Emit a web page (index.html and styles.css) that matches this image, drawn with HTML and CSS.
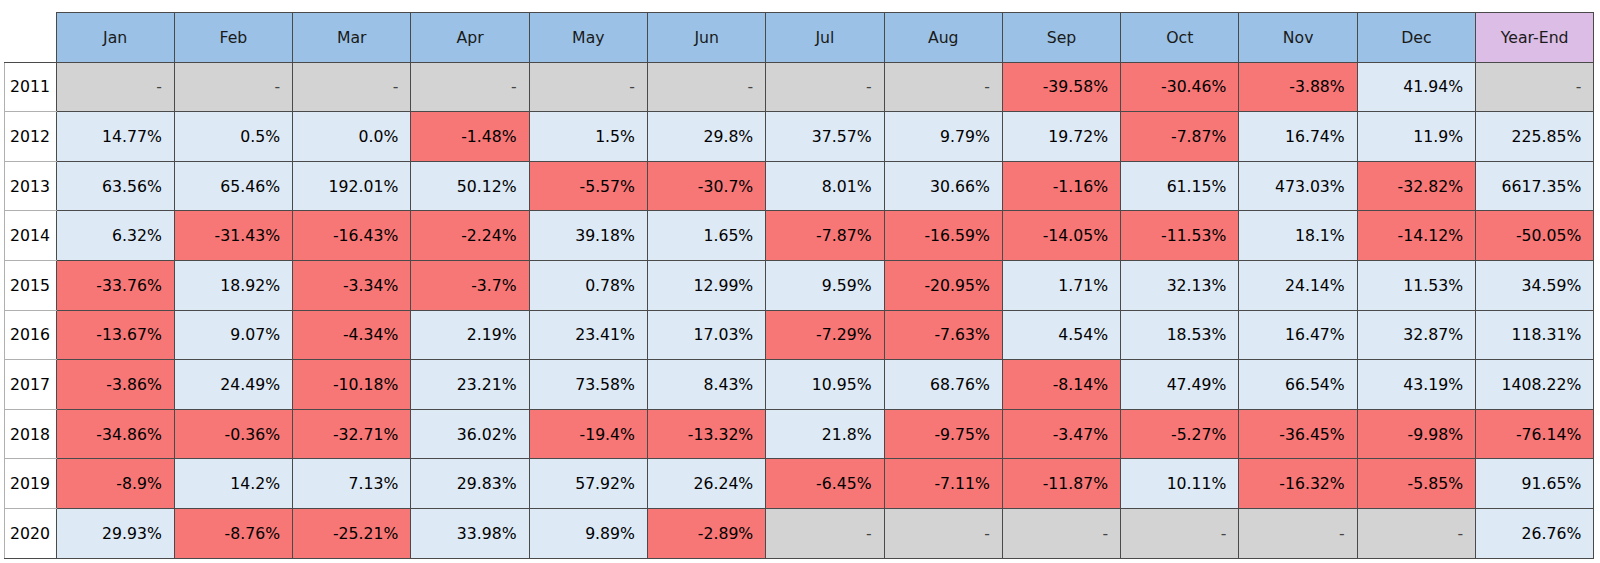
FILE: index.html
```html
<!DOCTYPE html>
<html>
<head>
<meta charset="utf-8">
<link rel="stylesheet" href="styles.css">
</head>
<body>
<table class="returns">
<thead>
<tr><th class="corner"></th><th>Jan</th><th>Feb</th><th>Mar</th><th>Apr</th><th>May</th><th>Jun</th><th>Jul</th><th>Aug</th><th>Sep</th><th>Oct</th><th>Nov</th><th>Dec</th><th class="ye">Year-End</th></tr>
</thead>
<tbody>
<tr><th class="yr">2011</th><td class="n">-</td><td class="n">-</td><td class="n">-</td><td class="n">-</td><td class="n">-</td><td class="n">-</td><td class="n">-</td><td class="n">-</td><td class="r">-39.58%</td><td class="r">-30.46%</td><td class="r">-3.88%</td><td class="p">41.94%</td><td class="n">-</td></tr>
<tr><th class="yr">2012</th><td class="p">14.77%</td><td class="p">0.5%</td><td class="p">0.0%</td><td class="r">-1.48%</td><td class="p">1.5%</td><td class="p">29.8%</td><td class="p">37.57%</td><td class="p">9.79%</td><td class="p">19.72%</td><td class="r">-7.87%</td><td class="p">16.74%</td><td class="p">11.9%</td><td class="p">225.85%</td></tr>
<tr><th class="yr">2013</th><td class="p">63.56%</td><td class="p">65.46%</td><td class="p">192.01%</td><td class="p">50.12%</td><td class="r">-5.57%</td><td class="r">-30.7%</td><td class="p">8.01%</td><td class="p">30.66%</td><td class="r">-1.16%</td><td class="p">61.15%</td><td class="p">473.03%</td><td class="r">-32.82%</td><td class="p">6617.35%</td></tr>
<tr><th class="yr">2014</th><td class="p">6.32%</td><td class="r">-31.43%</td><td class="r">-16.43%</td><td class="r">-2.24%</td><td class="p">39.18%</td><td class="p">1.65%</td><td class="r">-7.87%</td><td class="r">-16.59%</td><td class="r">-14.05%</td><td class="r">-11.53%</td><td class="p">18.1%</td><td class="r">-14.12%</td><td class="r">-50.05%</td></tr>
<tr><th class="yr">2015</th><td class="r">-33.76%</td><td class="p">18.92%</td><td class="r">-3.34%</td><td class="r">-3.7%</td><td class="p">0.78%</td><td class="p">12.99%</td><td class="p">9.59%</td><td class="r">-20.95%</td><td class="p">1.71%</td><td class="p">32.13%</td><td class="p">24.14%</td><td class="p">11.53%</td><td class="p">34.59%</td></tr>
<tr><th class="yr">2016</th><td class="r">-13.67%</td><td class="p">9.07%</td><td class="r">-4.34%</td><td class="p">2.19%</td><td class="p">23.41%</td><td class="p">17.03%</td><td class="r">-7.29%</td><td class="r">-7.63%</td><td class="p">4.54%</td><td class="p">18.53%</td><td class="p">16.47%</td><td class="p">32.87%</td><td class="p">118.31%</td></tr>
<tr><th class="yr">2017</th><td class="r">-3.86%</td><td class="p">24.49%</td><td class="r">-10.18%</td><td class="p">23.21%</td><td class="p">73.58%</td><td class="p">8.43%</td><td class="p">10.95%</td><td class="p">68.76%</td><td class="r">-8.14%</td><td class="p">47.49%</td><td class="p">66.54%</td><td class="p">43.19%</td><td class="p">1408.22%</td></tr>
<tr><th class="yr">2018</th><td class="r">-34.86%</td><td class="r">-0.36%</td><td class="r">-32.71%</td><td class="p">36.02%</td><td class="r">-19.4%</td><td class="r">-13.32%</td><td class="p">21.8%</td><td class="r">-9.75%</td><td class="r">-3.47%</td><td class="r">-5.27%</td><td class="r">-36.45%</td><td class="r">-9.98%</td><td class="r">-76.14%</td></tr>
<tr><th class="yr">2019</th><td class="r">-8.9%</td><td class="p">14.2%</td><td class="p">7.13%</td><td class="p">29.83%</td><td class="p">57.92%</td><td class="p">26.24%</td><td class="r">-6.45%</td><td class="r">-7.11%</td><td class="r">-11.87%</td><td class="p">10.11%</td><td class="r">-16.32%</td><td class="r">-5.85%</td><td class="p">91.65%</td></tr>
<tr><th class="yr">2020</th><td class="p">29.93%</td><td class="r">-8.76%</td><td class="r">-25.21%</td><td class="p">33.98%</td><td class="p">9.89%</td><td class="r">-2.89%</td><td class="n">-</td><td class="n">-</td><td class="n">-</td><td class="n">-</td><td class="n">-</td><td class="n">-</td><td class="p">26.76%</td></tr>
</tbody>
</table>
</body>
</html>
```
FILE: styles.css
```css
html, body {
  margin: 0;
  padding: 0;
  background: #ffffff;
}

.returns {
  margin: 12px 0 0 4px;
  border-collapse: collapse;
  table-layout: fixed;
  font-family: "DejaVu Sans", sans-serif;
  font-size: 15.7px;
  color: #000;
}

.returns th,
.returns td {
  box-sizing: border-box;
  height: 49.6px;
  padding: 0;
  border: 1px solid #4a4a4a;
  font-weight: normal;
  white-space: nowrap;
}

.returns thead th {
  width: 118.3px;
  background: #9bc2e6;
  text-align: center;
  color: #1a1a1a;
}

.returns thead th.corner {
  width: 51.5px;
  background: transparent;
  border-top: none;
  border-left: none;
}

.returns thead th.ye {
  background: #dbbde5;
}

.returns th.yr {
  background: #ffffff;
  text-align: left;
  padding-left: 5px;
  border-color: #b0b0b0;
  border-right-color: #4a4a4a;
}

.returns tbody tr:last-child th.yr {
  border-bottom-color: #4a4a4a;
}

.returns td {
  text-align: right;
  padding-right: 12px;
}

.returns td.p {
  background: #dde9f5;
}

.returns td.r {
  background: #f77777;
}

.returns td.n {
  background: #d3d3d3;
  color: #444;
}
```
